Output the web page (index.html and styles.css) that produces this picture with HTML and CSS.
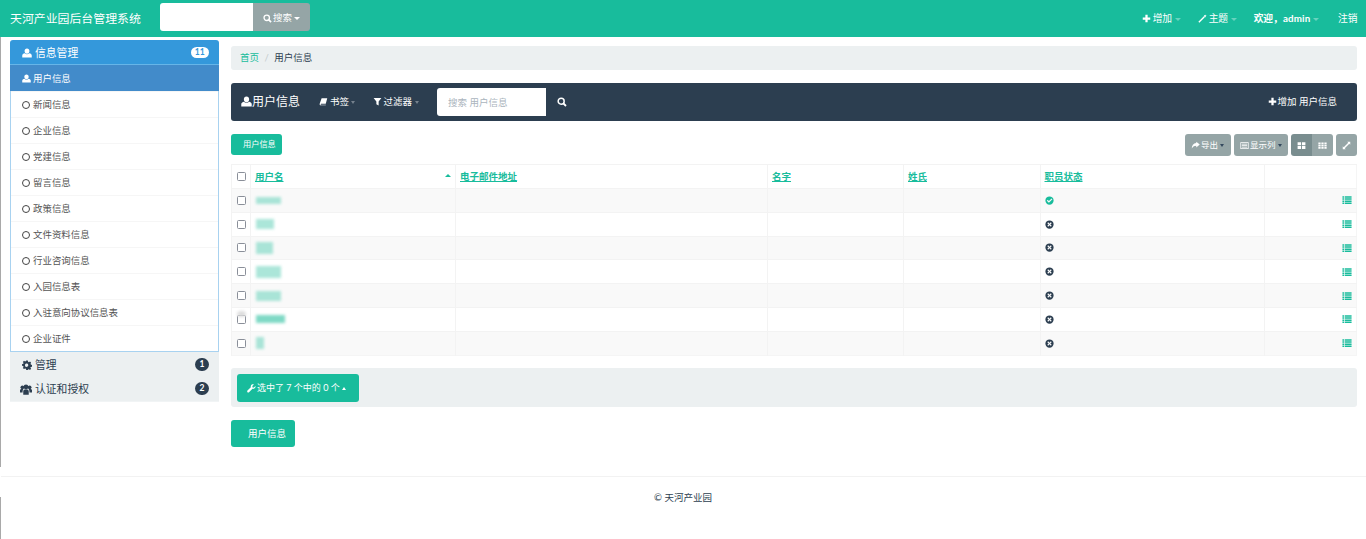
FILE: index.html
```html
<!DOCTYPE html>
<html lang="zh">
<head>
<meta charset="utf-8">
<title>天河产业园后台管理系统</title>
<link rel="stylesheet" href="styles.css">
</head>
<body>
<svg class="defs" width="0" height="0" aria-hidden="true">
  <symbol id="i-user" viewBox="0 0 12 12"><path d="M6 .6c1.800 0 2.900 1.300 2.900 3S7.800 7 6 7 3.100 5.300 3.100 3.600 4.200.6 6 .6zM3.300 6.300C4 7.100 5 7.600 6 7.600s2-.5 2.700-1.300c1.800.4 3 1.300 3 2.700v2.400H.3V9c0-1.400 1.200-2.300 3-2.700z" fill="currentColor"/></symbol>
  <symbol id="i-plus" viewBox="0 0 12 12"><path d="M4.500 1h3v3.500H11v3H7.500V11h-3V7.500H1v-3h3.500z" fill="currentColor"/></symbol>
  <symbol id="i-wand" viewBox="0 0 12 12"><path d="M.5 10.200L7.800 2.900l1.300 1.300L1.800 11.500zM9.500.5l.5 1.300 1.500.5-1.200.8-.2 1.400-1-1-1.400.2.700-1.200-.5-1.200 1.300.2z" fill="currentColor"/></symbol>
  <symbol id="i-search" viewBox="0 0 12 12"><circle cx="5" cy="5" r="3.600" fill="none" stroke="currentColor" stroke-width="1.800"/><path d="M7.500 7.500L10.800 10.800" stroke="currentColor" stroke-width="2.200"/></symbol>
  <symbol id="i-book" viewBox="0 0 12 12"><path d="M3.500 1.500H11L9 9H2.800c-.9 0-.9 1.300 0 1.300H9.200l-.2.700H2.300C1 11 .6 9.800 1 8.500z" fill="currentColor"/></symbol>
  <symbol id="i-filter" viewBox="0 0 12 12"><path d="M.8 1.200h10.400L7.500 6v5.200L4.500 9.500V6z" fill="currentColor"/></symbol>
  <symbol id="i-share" viewBox="0 0 12 12"><path d="M7 1l4.700 3.800L7 8.600V6.200C4.500 6.200 2.800 7 1 10c0-4 2.200-7 6-7.300z" fill="currentColor"/></symbol>
  <symbol id="i-listalt" viewBox="0 0 12 12"><path d="M.5 1.500h11v9H.500zM1.500 2.500v7h9v-7zM2.500 3.500h7v1h-7zM2.500 5.500h7v1h-7zM2.500 7.500h7v1h-7z" fill="currentColor" fill-rule="evenodd"/></symbol>
  <symbol id="i-thl" viewBox="0 0 12 12"><path d="M.8 1.500h4.600v4H.8zM6.600 1.500h4.600v4H6.600zM.8 6.500h4.600v4H.8zM6.600 6.500h4.600v4H6.600z" fill="currentColor"/></symbol>
  <symbol id="i-th" viewBox="0 0 12 12"><path d="M.5 2h3v2.300h-3zM4.500 2h3v2.300h-3zM8.500 2h3v2.300h-3zM.5 5h3v2.300h-3zM4.500 5h3v2.300h-3zM8.500 5h3v2.300h-3zM.5 8h3v2.300h-3zM4.500 8h3v2.300h-3zM8.500 8h3v2.300h-3z" fill="currentColor"/></symbol>
  <symbol id="i-resize" viewBox="0 0 12 12"><path d="M7 1h4v4L9.700 3.700 3.700 9.700 5 11H1V7l1.300 1.300 6-6z" fill="currentColor"/></symbol>
  <symbol id="i-cog" viewBox="0 0 12 12"><path d="M5 .7h2l.3 1.500 1 .4L9.600 1.800 11 3.200l-.8 1.300.4 1 1.400.5v2l-1.500.3-.4 1 .9 1.200-1.400 1.400-1.300-.8-1 .4L7 12H5l-.3-1.500-1-.4-1.300.8L1 9.500l.8-1.200-.4-1L0 7V5l1.500-.4.400-1L1 2.300 2.400.9l1.300.8 1-.4zM6 4.300a2 2 0 100 3.900 2 2 0 000-3.900z" fill="currentColor" fill-rule="evenodd"/></symbol>
  <symbol id="i-group" viewBox="0 0 14 12"><circle cx="2.800" cy="3.500" r="2.200" fill="currentColor"/><circle cx="11.200" cy="3.500" r="2.200" fill="currentColor"/><circle cx="7" cy="3" r="2.700" fill="currentColor"/><path d="M0 9.500V7c0-1 1-1.500 2.800-1.500.5 0 .8 0 1.100.1C3.300 6.200 3 7 3 8v1.500zM14 9.500V7c0-1-1-1.500-2.800-1.500-.5 0-.8 0-1.100.1.600.6.900 1.400.9 2.400v1.500zM3.800 12V8c0-1.300 1.300-2.400 3.200-2.400s3.200 1.100 3.200 2.400v4z" fill="currentColor"/></symbol>
  <symbol id="i-wrench" viewBox="0 0 12 12"><path d="M11.300 2.700L9.200 4.800 7.400 4.500 7.100 2.700 9.200.6C7.700 0 6 .5 5.300 1.900c-.4.800-.4 1.600-.2 2.400L.6 8.800c-.6.600-.6 1.500 0 2.100s1.500.6 2.100 0l4.600-4.500c2.300.6 4.700-1.500 4-3.700z" fill="currentColor"/></symbol>
  <symbol id="i-ok" viewBox="0 0 12 12"><path d="M6 .5a5.500 5.500 0 110 11A5.500 5.500 0 016 .5zM8.800 3.300L5.200 6.700 3.500 5.100 2.400 6.200l2.800 2.800 4.700-4.600z" fill="currentColor" fill-rule="evenodd"/></symbol>
  <symbol id="i-no" viewBox="0 0 12 12"><path d="M6 .5a5.500 5.500 0 110 11A5.500 5.500 0 016 .5zM4.200 3.100L3.100 4.200 4.900 6 3.100 7.800l1.100 1.100L6 7.100l1.800 1.800 1.100-1.100L7.100 6l1.800-1.800-1.100-1.100L6 4.900z" fill="currentColor" fill-rule="evenodd"/></symbol>
  <symbol id="i-thlist" viewBox="0 0 12 12"><path d="M.5 1.500h2.200v1.800H.5zM3.500 1.500h8v1.800h-8zM.5 4h2.200v1.800H.5zM3.500 4h8v1.800h-8zM.5 6.500h2.200v1.800H.5zM3.500 6.500h8v1.800h-8zM.5 9h2.200v1.800H.5zM3.500 9h8v1.800h-8z" fill="currentColor"/></symbol>
</svg>

<div class="edge-line" aria-hidden="true"></div>

<header class="topbar">
  <a class="brand">天河产业园后台管理系统</a>
  <form class="top-search">
    <input class="top-input" type="text">
    <button class="top-btn" type="button"><svg class="ic"><use href="#i-search"/></svg>搜索<span class="caret"></span></button>
  </form>
  <nav class="top-nav">
    <a><svg class="ic"><use href="#i-plus"/></svg>增加<span class="caret dim"></span></a>
    <a><svg class="ic"><use href="#i-wand"/></svg>主题<span class="caret dim"></span></a>
    <a class="welcome"><b>欢迎，</b><b class="admin">admin</b><span class="caret dim"></span></a>
    <a>注销</a>
  </nav>
</header>

<div class="layout">
  <aside class="sidebar">
    <div class="group-head open"><svg class="ic"><use href="#i-user"/></svg><span class="grow">信息管理</span><span class="badge light">11</span></div>
    <ul class="side-list">
      <li class="active"><svg class="ic"><use href="#i-user"/></svg>用户信息</li>
      <li><span class="ring"></span>新闻信息</li>
      <li><span class="ring"></span>企业信息</li>
      <li><span class="ring"></span>党建信息</li>
      <li><span class="ring"></span>留言信息</li>
      <li><span class="ring"></span>政策信息</li>
      <li><span class="ring"></span>文件资料信息</li>
      <li><span class="ring"></span>行业咨询信息</li>
      <li><span class="ring"></span>入园信息表</li>
      <li><span class="ring"></span>入驻意向协议信息表</li>
      <li><span class="ring"></span>企业证件</li>
    </ul>
    <div class="group-closed">
      <div class="group-head"><svg class="ic"><use href="#i-cog"/></svg><span class="grow">管理</span><span class="badge">1</span></div>
      <div class="group-head"><svg class="ic wide"><use href="#i-group"/></svg><span class="grow">认证和授权</span><span class="badge">2</span></div>
    </div>
  </aside>

  <main class="content">
    <div class="crumb"><a>首页</a><span class="sep">/</span><span>用户信息</span></div>

    <div class="darkbar">
      <span class="dark-title"><svg class="ic"><use href="#i-user"/></svg>用户信息</span>
      <a class="dark-link"><svg class="ic"><use href="#i-book"/></svg>书签<span class="caret dim"></span></a>
      <a class="dark-link"><svg class="ic"><use href="#i-filter"/></svg>过滤器<span class="caret dim"></span></a>
      <input class="dark-input" type="text" placeholder="搜索 用户信息">
      <svg class="ic dark-search"><use href="#i-search"/></svg>
      <a class="dark-add"><svg class="ic"><use href="#i-plus"/></svg>增加 用户信息</a>
    </div>

    <div class="toolbar">
      <a class="btn-teal small">用户信息</a>
      <div class="tools">
        <a class="tool export"><svg class="ic"><use href="#i-share"/></svg>导出<span class="caret dark"></span></a>
        <a class="tool columns"><svg class="ic"><use href="#i-listalt"/></svg>显示列<span class="caret dark"></span></a>
        <div class="tool-group"><a class="tool on"><svg class="ic"><use href="#i-thl"/></svg></a><a class="tool"><svg class="ic"><use href="#i-th"/></svg></a></div>
        <a class="tool"><svg class="ic"><use href="#i-resize"/></svg></a>
      </div>
    </div>

    <table class="grid">
      <colgroup><col class="c1"><col class="c2"><col class="c3"><col class="c4"><col class="c5"><col class="c6"><col></colgroup>
      <thead>
        <tr><th><span class="box"></span></th><th class="sorted"><a>用户名</a><span class="sort-up"></span></th><th><a>电子邮件地址</a></th><th><a>名字</a></th><th><a>姓氏</a></th><th><a>职员状态</a></th><th></th></tr>
      </thead>
      <tbody>
        <tr><td><span class="box"></span></td><td><span class="blur n1"></span></td><td></td><td></td><td></td><td><svg class="ic st ok"><use href="#i-ok"/></svg></td><td class="act"><svg class="ic"><use href="#i-thlist"/></svg></td></tr>
        <tr><td><span class="box"></span></td><td><span class="blur n2"></span></td><td></td><td></td><td></td><td><svg class="ic st"><use href="#i-no"/></svg></td><td class="act"><svg class="ic"><use href="#i-thlist"/></svg></td></tr>
        <tr><td><span class="box"></span></td><td><span class="blur n3"></span></td><td></td><td></td><td></td><td><svg class="ic st"><use href="#i-no"/></svg></td><td class="act"><svg class="ic"><use href="#i-thlist"/></svg></td></tr>
        <tr><td><span class="box"></span></td><td><span class="blur n4"></span></td><td></td><td></td><td></td><td><svg class="ic st"><use href="#i-no"/></svg></td><td class="act"><svg class="ic"><use href="#i-thlist"/></svg></td></tr>
        <tr><td><span class="box"></span></td><td><span class="blur n5"></span></td><td></td><td></td><td></td><td><svg class="ic st"><use href="#i-no"/></svg></td><td class="act"><svg class="ic"><use href="#i-thlist"/></svg></td></tr>
        <tr><td class="smudged"><span class="box"></span><span class="smudge"></span></td><td><span class="blur n6"></span></td><td></td><td></td><td></td><td><svg class="ic st"><use href="#i-no"/></svg></td><td class="act"><svg class="ic"><use href="#i-thlist"/></svg></td></tr>
        <tr><td><span class="box"></span></td><td><span class="blur n7"></span></td><td></td><td></td><td></td><td><svg class="ic st"><use href="#i-no"/></svg></td><td class="act"><svg class="ic"><use href="#i-thlist"/></svg></td></tr>
      </tbody>
    </table>

    <div class="actionbar">
      <a class="btn-teal action"><svg class="ic"><use href="#i-wrench"/></svg>选中了 7 个中的 0 个<span class="caret up"></span></a>
    </div>

    <a class="btn-teal bottom">用户信息</a>
  </main>
</div>

<footer class="footer">© 天河产业园</footer>
</body>
</html>
```

FILE: styles.css
```css
* { box-sizing: border-box; }
html, body { margin: 0; padding: 0; }
body {
  position: relative;
  min-height: 539px;
  background: #fff;
  color: #2c3e50;
  font-family: Lato, "Noto Sans CJK SC", "Liberation Sans", sans-serif;
  font-size: 9.5px;
  line-height: 1.43;
  overflow: hidden;
}
.defs { position: absolute; }
.edge-line {
  position: absolute; left: 0; top: 37px; bottom: 0; width: 1px;
  background: linear-gradient(#a9a9a9 0 430px, #fff 430px 460px, #a9a9a9 460px);
}
.ic { width: 9px; height: 9px; flex: none; display: inline-block; vertical-align: -1px; margin-right: 1px; }
.caret {
  display: inline-block; width: 0; height: 0; margin-left: 2px; vertical-align: 1px;
  border-left: 3px solid transparent; border-right: 3px solid transparent; border-top: 3px solid #fff;
}
.caret.dim { border-top-color: rgba(255,255,255,.35); margin-left: 3px; border-left-width: 2.5px; border-right-width: 2.5px; }
.caret.dark { border-top-color: #34495e; margin-left: 2px; border-left-width: 2.5px; border-right-width: 2.5px; }
.caret.up { border-top: 0; border-bottom: 3px solid #fff; border-left-width: 2.5px; border-right-width: 2.5px; }

/* top bar */
.topbar { height: 37px; background: #18bc9c; color: #fff; display: flex; align-items: center; padding: 0 8.500px 0 10px; }
.brand { font-size: 11.9px; width: 150px; flex: none; }
.top-search { display: flex; height: 28px; margin-top: -3px; }
.top-input { width: 93px; height: 28px; border: 0; border-radius: 3px 0 0 3px; background: #fff; padding: 0; }
.top-btn {
  width: 57px; height: 28px; border: 0; border-radius: 0 3px 3px 0; padding: 2px 0 0; background: #95a5a6; color: #fff;
  font: inherit; display: flex; align-items: center; justify-content: center;
}
.top-nav { margin-left: auto; display: flex; align-items: center; gap: 17px; margin-top: 1px; font-size: 9.75px; }
.top-nav .ic { margin-right: 2px; }
.top-nav .caret.dim { margin-left: 2.5px; border-left-width: 3px; border-right-width: 3px; }
.top-nav .welcome { margin-right: 2px; }
.admin { letter-spacing: .2px; }

/* layout */
.layout { display: flex; align-items: flex-start; padding: 3px 9px 0 10px; gap: 12px; }
.sidebar { width: 209px; flex: none; }
.group-head { height: 24px; display: flex; align-items: center; padding: 2px 10px 0 12px; font-size: 10.8px; color: #2c3e50; }
.group-head .ic { width: 10px; height: 10px; margin-right: 3px; }
.group-head .ic.wide { width: 12px; height: 11px; margin: 0 3px 0 -2px; }
.group-head.open { background: #3498db; color: #fff; height: 25px; border-radius: 3px 3px 0 0; border-bottom: 1px solid #66b5e8; }
.group-closed .badge { margin-top: -2px; }
.open .badge { margin-top: -2px; }
.grow { flex: 1; }
.badge {
  min-width: 14px; height: 12px; border-radius: 7px; background: #2c3e50; color: #fff;
  font-size: 8.5px; font-weight: 700; line-height: 12px; text-align: center;
}
.group-closed .badge { width: 14px; height: 13px; line-height: 13px; }
.badge.light { background: #fff; color: #3498db; width: 18.500px; height: 11px; line-height: 11px; }
.side-list { list-style: none; margin: 0; padding: 0; background: #fff; border: 1px solid #a8d2f0; border-top: 0; font-size: 9.45px; }
.side-list li {
  height: 26px; display: flex; align-items: center; padding-left: 10.500px; color: #555;
  border-top: 1px solid #f6f6f6;
}
.side-list li:first-child { border-top: 0; padding-top: 1px; }
.side-list li.active { background: #428bca; color: #fff; margin: 0 -1px; padding-left: 12px; }
.side-list .ic { width: 9px; height: 9px; margin-right: 2px; }
.ring { width: 8px; height: 8px; border: 1.500px solid #444; border-radius: 50%; margin-right: 3.500px; flex: none; }
.group-closed { background: #ecf0f1; height: 50px; border-bottom: 1px solid #f1f4f5; }

/* content */
.content { flex: 1; min-width: 0; padding-top: 6px; display: block; }
.crumb { height: 23.500px; background: #ecf0f1; border-radius: 3px; display: flex; align-items: center; padding: 1px 0 0 9px; color: #2c3e50; }
.crumb a { color: #18bc9c; }
.sep { color: #c3cbcc; margin: 0 5.500px; }

.darkbar {
  height: 38px; margin-top: 13.500px; background: #2c3e50; border-radius: 3px; color: #fff;
  display: flex; align-items: center; padding: 0 20px 0 10px;
}
.dark-title { font-size: 12px; width: 78px; flex: none; }
.dark-title .ic { width: 11px; height: 11px; margin-right: 0; vertical-align: -1px; }
.dark-link { display: inline-block; margin-right: 18px; }
.dark-link .ic { margin-right: 2px; }
.dark-link:first-of-type .caret { margin-left: 1.500px; }
.dark-input {
  width: 109px; height: 28px; border: 0; border-radius: 3px 0 0 3px; background: #fff; padding: 0 11px;
  font: inherit;
}
.dark-input::placeholder { color: #aab4bd; opacity: 1; }
.dark-search { margin-left: 11px; width: 10px; height: 10px; }
.dark-add { margin-left: auto; }

.toolbar { display: flex; justify-content: space-between; align-items: flex-start; margin-top: 13px; }
.btn-teal { display: inline-flex; align-items: center; background: #18bc9c; color: #fff; border-radius: 3px; }
.btn-teal.small { width: 51px; height: 21px; font-size: 8.2px; padding-left: 12px; }
.tools { display: flex; gap: 3px; }
.tool-group { display: flex; }
.tool {
  height: 22px; background: #95a5a6; color: #fff; border-radius: 3px; padding: 0 0 0 6px;
  display: flex; align-items: center; font-size: 8.500px;
}
.tool.export { width: 46px; }
.tool.columns { width: 54px; }
.tool .ic { margin-right: 1px; }
.tool-group .tool { width: 21px; justify-content: center; border-radius: 0; padding: 0; }
.tool-group .tool:first-child { border-radius: 3px 0 0 3px; }
.tool-group .tool:last-child { border-radius: 0 3px 3px 0; }
.tool.on { background: #798d8f; }
.tools > .tool:last-child { width: 21px; justify-content: center; padding: 0; }

.grid { width: 100%; margin-top: 8px; border-collapse: collapse; table-layout: fixed; border: 1px solid #f5f5f5; }
.c1 { width: 19px; } .c2 { width: 205px; } .c3 { width: 312px; } .c4 { width: 136px; } .c5 { width: 136.500px; } .c6 { width: 224.500px; }
.grid th, .grid td { height: 23.800px; padding: 0 4px; border-left: 1px solid #f3f3f3; border-top: 1px solid #f3f3f3; text-align: left; vertical-align: middle; position: relative; }
.grid th { height: 24px; }
.grid tbody tr:nth-child(odd) { background: #f9f9f9; }
.grid th a { color: #18bc9c; font-weight: 700; text-decoration: underline; }
.box { display: block; width: 9px; height: 9px; margin-left: .5px; border: 1.200px solid #8a8f99; border-radius: 1.500px; background: #fff; }
.sort-up { position: absolute; right: 4px; top: 9px; border-left: 3px solid transparent; border-right: 3px solid transparent; border-bottom: 3px solid #18bc9c; }
.blur { display: block; height: 10px; background: #7fd9c5; filter: blur(1.500px); opacity: .65; margin-left: 1px; }
.n1 { width: 25px; height: 7px; } .n2 { width: 18px; height: 10px; } .n3 { width: 17px; height: 12px; }
.n4 { width: 25px; height: 12px; } .n5 { width: 25px; height: 10px; } .n6 { width: 29px; height: 8px; opacity: 1; } .n7 { width: 8px; height: 12px; }
.st { width: 9px; height: 9px; color: #2c3e50; display: block; margin: 0; }
.st.ok { color: #18bc9c; }
.act { color: #18bc9c; }
.act .ic { display: block; margin: 0 0 0 auto; width: 10px; height: 10px; }
.smudge { position: absolute; left: 5px; top: 3px; width: 9px; height: 6px; background: #dcdcdc; border-radius: 50%; filter: blur(1.500px); }

.actionbar { height: 39px; margin-top: 12px; background: #ecf0f1; border-radius: 3px; padding: 6px; }
.btn-teal.action { height: 28px; width: 122px; padding: 2px 0 0 10px; font-size: 9px; }
.btn-teal.bottom { margin-top: 13px; width: 64px; height: 27px; padding: 2px 0 0 17px; }

.footer { margin-top: 29px; border-top: 1px solid #f2f2f2; text-align: center; padding-top: 14px; color: #2c3e50; }
```
